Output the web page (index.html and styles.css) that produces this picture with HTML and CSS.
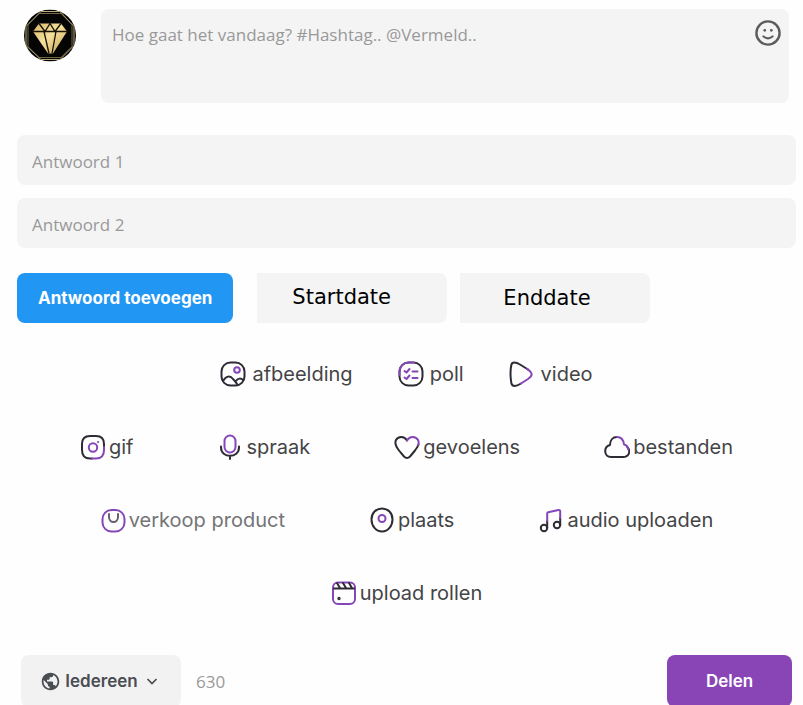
FILE: index.html
```
<!DOCTYPE html>
<html lang="nl">

<head>
    <meta charset="utf-8">
    <meta name="viewport" content="width=device-width, initial-scale=1">
    <title>Nieuw bericht</title>
    <link rel="stylesheet" href="styles.css">
</head>

<body>
    <form class="publisher">
        <div class="post-head">
            <svg class="avatar" viewBox="0 0 52 52" aria-hidden="true">
                <defs>
                    <clipPath id="avatarClip"><circle cx="26" cy="26" r="26"/></clipPath>
                    <linearGradient id="gold" x1="0" y1="0" x2="1" y2="1">
                        <stop offset="0" stop-color="#d6b364"/>
                        <stop offset=".45" stop-color="#f5e19c"/>
                        <stop offset="1" stop-color="#c39a4c"/>
                    </linearGradient>
                </defs>
                <g clip-path="url(#avatarClip)">
                    <rect width="52" height="52" fill="#050505"/>
                    <path d="M17 2h19l14 15v19L36 50H17L2 36V17z" fill="none" stroke="#b8a878" stroke-width="1"/>
                    <path d="M15 4h22l11 11v22L37 48H15L4 37V15z" fill="none" stroke="#8d8158" stroke-width=".8"/>
                </g>
                <path d="M15 14h22l6 8-14 22h-5L9 22z" fill="url(#gold)"/>
                <path d="M8 22h36M15 14l6 8 5-8 5 8 6-8M20 22l5 22M32 22l-4 22" fill="none" stroke="#171106" stroke-width="1.3"/>
            </svg>
            <div class="post-box">
                <textarea class="post-text" aria-label="Bericht" placeholder="Hoe gaat het vandaag? #Hashtag.. @Vermeld.."></textarea>
                <button type="button" class="emoji" aria-label="Emoji">
                    <svg viewBox="0 0 26 26" fill="none" stroke="#5c5c5c" stroke-linecap="round">
                        <circle cx="13" cy="13" r="11.6" stroke-width="2.4"/>
                        <path d="M8.500 16.500q4.500 3.600 9 0" stroke-width="2.200"/>
                        <path d="M9.700 10.300h.1M16.300 10.300h.1" stroke-width="2.800"/>
                    </svg>
                </button>
            </div>
        </div>

        <div class="answers">
            <input type="text" class="answer" name="answer1" aria-label="Antwoord 1" placeholder="Antwoord 1">
            <input type="text" class="answer" name="answer2" aria-label="Antwoord 2" placeholder="Antwoord 2">
        </div>

        <div class="poll-row">
            <button type="button" class="add-answer">Antwoord toevoegen</button>
            <input type="text" class="date" name="startdate" aria-label="Startdate" placeholder="Startdate">
            <input type="text" class="date date-end" name="enddate" aria-label="Enddate" placeholder="Enddate">
        </div>

        <div class="tools">
            <div class="tool-row tool-row-main">
                <button type="button" class="tool">
                    <svg viewBox="0 0 26 26">
                        <rect x="1.5" y="1.5" width="23" height="23" rx="9"/>
                        <path d="M3 20c3-5 7-6 10-2 2 2 3 3 4 5M16 20c2-3 5-3 7-1"/>
                        <circle class="purple" cx="17" cy="9" r="2.8"/>
                    </svg>
                    afbeelding
                </button>
                <button type="button" class="tool">
                    <svg viewBox="0 0 26 26">
                        <rect x="1.5" y="1.5" width="23" height="23" rx="9"/>
                        <path class="purple" d="M1.5 14v-3.500a9 9 0 0 1 9-9h5.500M6.500 10l2 1.500 3-3.500M14.500 10.500h5M6.500 16.500l2 1.500 3-3.500M14.500 17h5"/>
                    </svg>
                    poll
                </button>
                <button type="button" class="tool">
                    <svg viewBox="0 0 26 26">
                        <path d="M12 22.500C7 25.500 3 26 2.300 22 1.500 17 1.500 8 2.300 4 3 .5 7 1 11 3.500l8 5"/>
                        <path class="purple" d="M18 7.800c6 4 6 7 1 10.200l-7 4.500"/>
                    </svg>
                    video
                </button>
            </div>
            <div class="tool-row">
                <button type="button" class="tool">
                    <svg viewBox="0 0 26 26">
                        <path d="M12 24.500h-2C4 24.500 2 21 2 16v-6q0-8 8-8h6q8 0 8 8v4"/>
                        <path class="purple" d="M24 13v3q0 8.500-8 8.500h-4"/>
                        <circle class="purple" cx="13" cy="13.500" r="4.200"/>
                        <path class="purple" d="M18 8h.1"/>
                    </svg>
                    gif
                </button>
                <button type="button" class="tool">
                    <svg viewBox="0 0 26 26">
                        <rect class="purple" x="7.500" y="1.500" width="11" height="17" rx="5.500"/>
                        <path d="M4 12.500v1c0 11 18 11 18 0v-1M13 22v3"/>
                    </svg>
                    spraak
                </button>
                <button type="button" class="tool">
                    <svg viewBox="0 0 26 26">
                        <path d="M13 6.500C10 1.500 4 2.500 2 6c-2 4 1 8 3 10.500l5 6c2 2 4 2 6 0l5-6c1.500-2 3-4 3.500-6"/>
                        <path class="purple" d="M13 6.500C16 1.500 22 2.500 24 6c.8 1.500.8 3.500.2 5"/>
                    </svg>
                    gevoelens
                </button>
                <button type="button" class="tool">
                    <svg viewBox="0 0 26 26">
                        <path d="M13 3C9 3 6 6 6 11c-7 2-6 12 1 12h12c6 0 8-6 4.500-9.500"/>
                        <path class="purple" d="M13 3c4.500 0 6.500 3 7 7.500 2 .5 4 2 4.300 5"/>
                    </svg>
                    bestanden
                </button>
            </div>
            <div class="tool-row">
                <button type="button" class="tool tool-muted">
                    <svg viewBox="0 0 26 26">
                        <rect class="purple" x="2.500" y="3" width="22" height="21.500" rx="9"/>
                        <path d="M9 7v3c0 6.500 9 6.500 9 0V7"/>
                    </svg>
                    verkoop product
                </button>
                <button type="button" class="tool">
                    <svg viewBox="0 0 26 26">
                        <path d="M13 1.500c6 0 10.500 4.500 10.500 11C23.500 19 19 24.500 13 24.500S2.500 19 2.500 12.500c0-6.500 4.500-11 10.500-11z"/>
                        <circle class="purple" cx="13" cy="11.500" r="3.500"/>
                    </svg>
                    plaats
                </button>
                <button type="button" class="tool">
                    <svg viewBox="0 0 26 26">
                        <circle cx="6" cy="21" r="3.200"/>
                        <circle cx="19" cy="18" r="3.200"/>
                        <path d="M9.200 21v-7M22.200 18v-7"/>
                        <path class="purple" d="M9.200 14V6.500q0-1 1-1.300L20.500 3q1.700-.3 1.700 1.400V11"/>
                    </svg>
                    audio uploaden
                </button>
            </div>
            <div class="tool-row">
                <button type="button" class="tool">
                    <svg viewBox="0 0 26 26">
                        <rect class="purple" x="2" y="2.500" width="22" height="21.500" rx="5"/>
                        <path d="M3 8.500h20M6 3l3 5M12 3l3 5M18 3l3 5"/>
                        <circle cx="8" cy="18.500" r=".7"/>
                    </svg>
                    upload rollen
                </button>
            </div>
        </div>

        <div class="post-foot">
            <button type="button" class="privacy">
                <svg class="globe" viewBox="0 0 24 24" fill="#4a4d52">
                    <path d="M12 2C6.480 2 2 6.480 2 12s4.480 10 10 10 10-4.480 10-10S17.520 2 12 2zm-1 17.930c-3.950-.49-7-3.850-7-7.930 0-.62.080-1.210.210-1.790L9 15v1c0 1.100.9 2 2 2v1.930zm6.900-2.540c-.26-.81-1-1.390-1.900-1.390h-1v-3c0-.55-.45-1-1-1H8v-2h2c.55 0 1-.45 1-1V7h2c1.100 0 2-.9 2-2v-.41c2.930 1.190 5 4.060 5 7.410 0 2.080-.8 3.970-2.100 5.390z"/>
                </svg>
                Iedereen
                <svg class="chevron" viewBox="0 0 12 12" fill="none" stroke="#4a4d52" stroke-width="1.700">
                    <path d="M1.500 4l4.500 4.500L10.500 4"/>
                </svg>
            </button>
            <span class="counter">630</span>
            <button type="submit" class="share">Delen</button>
        </div>
    </form>
</body>

</html>
```

FILE: styles.css
```
* {
    box-sizing: border-box;
}

body {
    margin: 0;
    background-color: #fefefe;
    font-family: "Open Sans", "Noto Sans", sans-serif;
    overflow: hidden;
}

button,
input,
textarea {
    border: none;
    outline: none;
    font-family: inherit;
}

button {
    cursor: pointer;
}

.publisher {
    padding: 9px 7px 0 17px;
}

/* Avatar and message */
.post-head {
    display: flex;
    align-items: flex-start;
    gap: 25px;
    padding: 0 7px;
}

.avatar {
    width: 52px;
    height: 53px;
    flex-shrink: 0;
}

.post-box {
    display: flex;
    flex: 1;
    align-items: flex-start;
    height: 94px;
    padding: 11px 8px 9px 11px;
    border-radius: 8px;
    background-color: #f4f4f4;
}

.post-text {
    flex: 1;
    height: 74px;
    padding: 3px 0;
    background: none;
    font-size: 17px;
    line-height: 24px;
    resize: none;
}

.post-text::placeholder,
.answer::placeholder {
    color: #999;
    opacity: 1;
}

.emoji {
    width: 26px;
    height: 26px;
    padding: 0;
    background: none;
}

.emoji svg {
    display: block;
}

/* Poll answers */
.answers {
    display: flex;
    flex-direction: column;
    gap: 13px;
    margin-top: 32px;
}

.answer {
    width: 100%;
    height: 50px;
    padding: 2px 15px 0;
    border-radius: 8px;
    background-color: #f4f4f4;
    font-size: 17px;
}

.poll-row {
    display: flex;
    gap: 13px;
    margin-top: 25px;
}

.add-answer {
    height: 50px;
    margin-right: 11px;
    padding: 0 21px;
    border-radius: 8px;
    background-color: #2196f3;
    color: #fff;
    font-family: Inter, sans-serif;
    font-size: 17px;
    font-weight: 700;
}

.date {
    width: 190px;
    height: 50px;
    padding: 0 0 3px 35px;
    border-radius: 0 8px 8px 0;
    background-color: #f4f4f4;
    font-family: "DejaVu Sans", sans-serif;
    font-size: 21px;
}

.date-end {
    padding: 0 0 0 43px;
}

.date::placeholder {
    color: #000;
    opacity: 1;
}

/* Attachment types */
.tools {
    display: flex;
    flex-direction: column;
    gap: 43px;
    margin-top: 36px;
}

.tool-row {
    display: flex;
    justify-content: center;
    gap: 84px;
}

.tool-row-main {
    gap: 45px;
}

.tool {
    display: flex;
    align-items: center;
    gap: 3px;
    height: 30px;
    padding: 0;
    background: none;
    color: #444446;
    font-family: Inter, sans-serif;
    font-size: 20px;
    font-weight: 400;
}

.tool-row-main .tool {
    gap: 6px;
}

.tool-muted {
    color: #747476;
}

.tool svg {
    width: 26px;
    height: 26px;
    fill: none;
    stroke: #2f2b35;
    stroke-width: 2;
    stroke-linecap: round;
    stroke-linejoin: round;
}

.tool .purple {
    stroke: #8547b8;
}

.tool-muted svg {
    stroke: #66606c;
}

/* Footer */
.post-foot {
    display: flex;
    align-items: center;
    margin-top: 47px;
    padding: 0 4px;
}

.privacy {
    display: flex;
    align-items: center;
    justify-content: center;
    gap: 4px;
    width: 160px;
    height: 52px;
    padding: 0 4px 0 0;
    border-radius: 8px;
    background-color: #f2f2f2;
    color: #4a4d52;
    font-family: Inter, sans-serif;
    font-size: 17px;
    font-weight: 600;
}

.globe {
    width: 21px;
    height: 21px;
}

.chevron {
    width: 12px;
    height: 12px;
    margin-left: 4px;
}

.counter {
    margin-left: 15px;
    color: #999;
    font-size: 17px;
}

.share {
    width: 125px;
    height: 52px;
    margin-left: auto;
    border-radius: 8px;
    background-color: #8944b5;
    color: #fff;
    font-family: Inter, sans-serif;
    font-size: 17px;
    font-weight: 600;
}
```
